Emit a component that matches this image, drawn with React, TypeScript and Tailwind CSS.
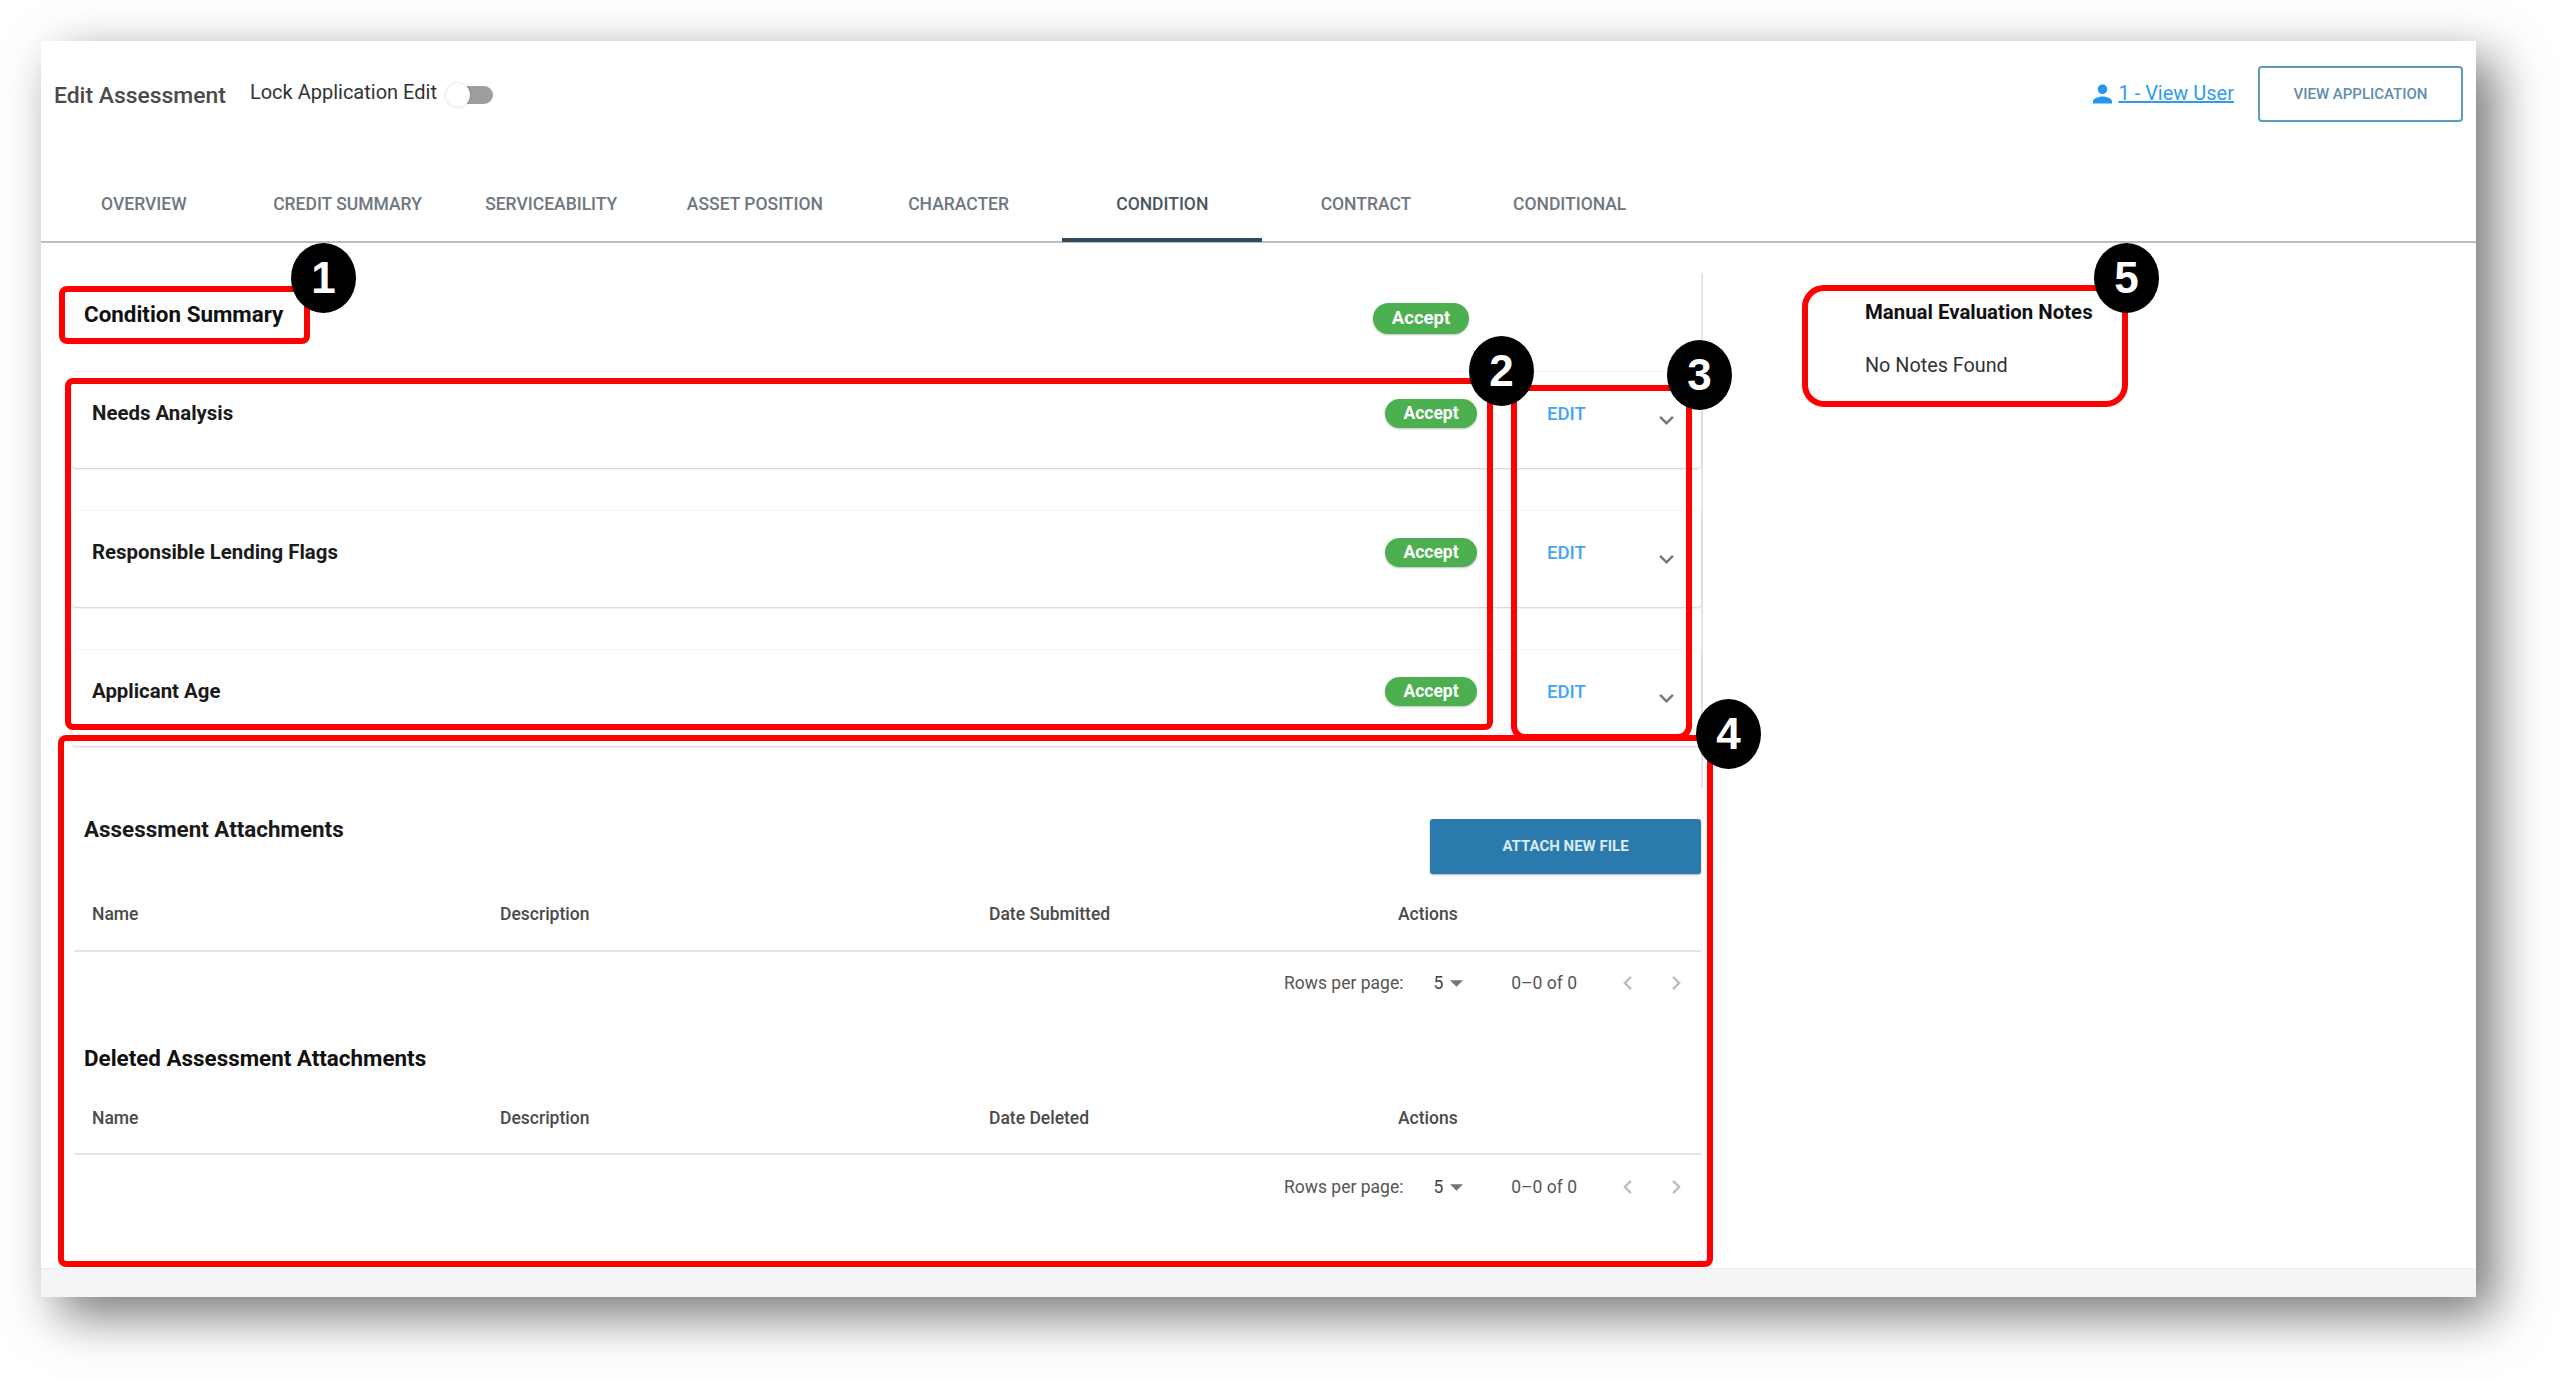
import React from "react";

const tabs = ["OVERVIEW", "CREDIT SUMMARY", "SERVICEABILITY", "ASSET POSITION", "CHARACTER", "CONDITION", "CONTRACT", "CONDITIONAL"];
const rows = ["Needs Analysis", "Responsible Lending Flags", "Applicant Age"];

function Chevron() {
  return (
    <svg viewBox="6 8.59 12 7.41" className="w-[15px] h-[9px] mt-[17px] fill-[#777777]">
      <path d="M16.59 8.59L12 13.17 7.41 8.59 6 10l6 6 6-6z" />
    </svg>
  );
}

function Pager() {
  return (
    <div className="flex items-center justify-end text-[17.5px] text-[#555]">
      <span>Rows per page:</span>
      <span className="ml-[30px] text-[#444]">5</span>
      <svg viewBox="7 10 10 5" className="ml-[7px] w-[13px] h-[7px] fill-[#757575]">
        <path d="M7 10l5 5 5-5z" />
      </svg>
      <span className="ml-[48px]">0–0 of 0</span>
      <svg viewBox="8 6 7.41 12" className="ml-[46px] w-[9px] h-[14px] fill-[#bdbdbd]">
        <path d="M15.41 7.41L14 6l-6 6 6 6 1.41-1.41L10.83 12z" />
      </svg>
      <svg viewBox="8.59 6 7.41 12" className="ml-[40px] mr-[20px] w-[9px] h-[14px] fill-[#bdbdbd]">
        <path d="M10 6L8.59 7.41 13.17 12l-4.58 4.59L10 18l6-6z" />
      </svg>
    </div>
  );
}

function HeaderRow({ date, cls }: { date: string; cls: string }) {
  return (
    <div className={"grid grid-cols-[408px_489px_409px_1fr] items-center pl-[18px] border-b-2 border-[#e4e4e4] text-[17.5px] font-medium text-[#4a4a4a] " + cls}>
      <span>Name</span>
      <span>Description</span>
      <span>{date}</span>
      <span>Actions</span>
    </div>
  );
}

function Num({ n, cls }: { n: number; cls: string }) {
  return (
    <div className={"absolute w-[65px] h-[70px] rounded-[50%] bg-black text-white flex items-center justify-center text-[44px] font-bold font-['Liberation_Sans',sans-serif] " + cls}>
      {n}
    </div>
  );
}

export default function App() {
  return (
    <div className="relative w-[2560px] h-[1381px] bg-white pt-[41px] pl-[41px] overflow-hidden font-['Roboto',sans-serif]">
      <div className="w-[2435px] h-[1256px] bg-white flex flex-col shadow-[18px_18px_48px_rgba(0,0,0,0.55)]">
        {/* top bar */}
        <div className="h-[108px] flex items-center pl-[13px] pr-[13px]">
          <span className="mt-[2px] text-[22.9px] font-medium text-[#4a4a4a]">Edit Assessment</span>
          <span className="ml-[24px] -mt-[6px] text-[20px] text-[#333]">Lock Application Edit</span>
          <div className="relative ml-[30px] w-[26px] h-[18px] rounded-r-full bg-[#9e9e9e]">
            <div className="absolute -left-[21px] -top-[3px] w-[24px] h-[24px] rounded-full bg-white shadow-[0_0_3px_rgba(0,0,0,0.2)]" />
          </div>
          <svg viewBox="4 4 16 16" className="ml-auto -mt-[2px] w-[19px] h-[20px] fill-[#2196f3]">
            <path d="M12 12c2.21 0 4-1.79 4-4s-1.79-4-4-4-4 1.79-4 4 1.79 4 4 4zm0 2c-2.67 0-8 1.34-8 4v2h16v-2c0-2.66-5.33-4-8-4z" />
          </svg>
          <span className="ml-[6px] -mt-[4px] text-[20px] text-[#2e9bf0] underline">1 - View User</span>
          <div className="ml-[24px] -mt-[2px] w-[205px] h-[56px] rounded-[4px] border-2 border-[#5b9cc4] flex items-center justify-center text-[15px] font-medium text-[#5f8dae]">
            VIEW APPLICATION
          </div>
        </div>

        {/* tabs */}
        <div className="h-[94px] flex items-end border-b-2 border-[#bdbdbd] pl-[1px]">
          {tabs.map((t) => (
            <div
              key={t}
              className={
                "w-[199.7px] mx-[2px] h-[74px] -mb-[1px] pt-[3px] flex items-center justify-center text-[17.5px] font-medium border-b-4 " +
                (t === "CONDITION" ? "border-[#34495e] text-[#4a5560]" : "border-transparent text-[#6e7780]")
              }
            >
              {t}
            </div>
          ))}
        </div>

        {/* body */}
        <div className="flex-1 flex">
          <div className="w-[1662px]">
            <div className="mt-[30px] h-[515px] border-r-2 border-[#e6e6e6] pl-[31px]">
              <div className="h-[99px] flex items-start pl-[12px]">
                <span className="mt-[27px] text-[22.4px] leading-[28px] font-bold text-[#111]">Condition Summary</span>
                <div className="ml-auto mr-[232px] mt-[30px] w-[96px] h-[31px] rounded-full bg-[#4caf50] shadow-[0_1px_2px_rgba(0,0,0,0.25)] text-white text-[18.5px] font-bold flex items-center justify-center">
                  Accept
                </div>
              </div>
              {rows.map((r) => (
                <div key={r} className="h-[96px] mb-[43px] rounded-[4px] bg-white shadow-[0_1px_2px_rgba(0,0,0,0.2),0_-1px_1px_rgba(0,0,0,0.04)] flex items-start pl-[20px] pt-[27px]">
                  <span className="flex-1 text-[20.4px] leading-[29px] font-bold text-[#1a1a1a]">{r}</span>
                  <div className="w-[92px] h-[29px] rounded-full bg-[#4caf50] shadow-[0_1px_2px_rgba(0,0,0,0.25)] text-white text-[17.5px] font-bold flex items-center justify-center">
                    Accept
                  </div>
                  <span className="ml-[70px] mt-[1px] w-[112px] text-[18.5px] leading-[29px] font-medium text-[#42a5f5]">EDIT</span>
                  <Chevron />
                  <div className="w-[27px]" />
                </div>
              ))}
            </div>

            <div className="pl-[33px] w-[1660px]">
              <div className="flex items-start mt-[27px] pl-[10px]">
                <span className="text-[22.4px] leading-[28px] font-bold text-[#1a1a1a]">Assessment Attachments</span>
                <div className="ml-auto mt-[4px] w-[271px] h-[55px] rounded-[3px] bg-[#2a7aad] shadow-[0_1px_2px_rgba(0,0,0,0.3)] flex items-center justify-center text-[15px] font-bold text-[#dbe9f3]">
                  ATTACH NEW FILE
                </div>
              </div>
              <HeaderRow date="Date Submitted" cls="h-[78px] pt-[4px]" />
              <div className="h-[62px] flex flex-col justify-center"><Pager /></div>
              <div className="mt-[30px] pl-[10px] text-[22.4px] leading-[28px] font-bold text-[#111]">Deleted Assessment Attachments</div>
              <HeaderRow date="Date Deleted" cls="h-[83px] pt-[11px]" />
              <div className="h-[64px] flex flex-col justify-center"><Pager /></div>
            </div>
          </div>

          <div className="pl-[162px] pt-[55px]">
            <div className="text-[20.4px] leading-[28px] font-bold text-[#111]">Manual Evaluation Notes</div>
            <div className="mt-[26px] text-[19.8px] leading-[28px] text-[#333]">No Notes Found</div>
          </div>
        </div>

        <div className="h-[29px] bg-[#f4f5f7] border-t border-[#eceeee]" />
      </div>

      {/* annotations */}
      <div className="absolute left-[59px] top-[286px] w-[251px] h-[58px] rounded-[8px] border-[6px] border-[#ff0000]" />
      <div className="absolute left-[65px] top-[378px] w-[1428px] h-[352px] rounded-[8px] border-[6px] border-[#ff0000]" />
      <div className="absolute left-[1511px] top-[385px] w-[181px] h-[355px] rounded-[14px] border-[6px] border-[#ff0000]" />
      <div className="absolute left-[58px] top-[735px] w-[1655px] h-[532px] rounded-[8px] border-[6px] border-[#ff0000]" />
      <div className="absolute left-[1802px] top-[285px] w-[326px] h-[122px] rounded-[22px] border-[6px] border-[#ff0000]" />
      <Num n={1} cls="left-[291px] top-[243px]" />
      <Num n={2} cls="left-[1469px] top-[336px]" />
      <Num n={3} cls="left-[1667px] top-[340px]" />
      <Num n={4} cls="left-[1696px] top-[699px]" />
      <Num n={5} cls="left-[2094px] top-[243px]" />
    </div>
  );
}
